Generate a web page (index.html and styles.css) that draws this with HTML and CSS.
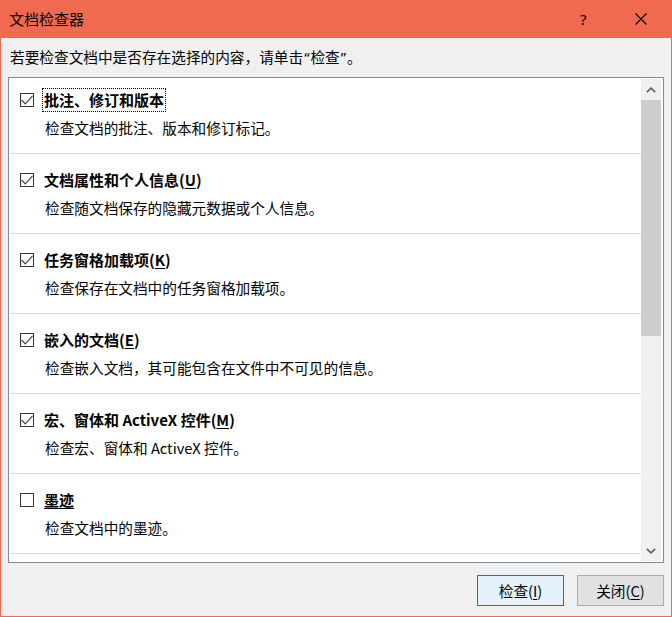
FILE: index.html
```html
<!DOCTYPE html>
<html lang="zh-CN">
<head>
<meta charset="utf-8">
<title>文档检查器</title>
<link rel="stylesheet" href="styles.css">
</head>
<body>
<div class="window">
  <div class="titlebar">
    <span class="title">文档检查器</span>
    <span class="help">?</span>
    <svg class="close" width="12" height="12" viewBox="0 0 12 12"><path d="M0.5 0.5 L11.5 11.5 M11.5 0.5 L0.5 11.5" stroke="#000" stroke-width="1.1" fill="none"/></svg>
  </div>
  <div class="content">
    <div class="intro">若要检查文档中是否存在选择的内容，请单击<span class="q">“</span>检查<span class="q">”</span>。</div>
    <div class="list">
      <div class="rows">
        <div class="row">
          <div class="head">
            <span class="cb"><svg width="12" height="12" viewBox="0 0 12 12"><polyline points="0.6,6 4.3,9.8 11.6,1.8" fill="none" stroke="#444" stroke-width="1.2"/></svg></span>
            <span class="name focus">批注、修订和版本</span>
          </div>
          <div class="desc">检查文档的批注、版本和修订标记。</div>
        </div>
        <div class="row">
          <div class="head">
            <span class="cb"><svg width="12" height="12" viewBox="0 0 12 12"><polyline points="0.6,6 4.3,9.8 11.6,1.8" fill="none" stroke="#444" stroke-width="1.2"/></svg></span>
            <span class="name">文档属性和个人信息(<u>U</u>)</span>
          </div>
          <div class="desc">检查随文档保存的隐藏元数据或个人信息。</div>
        </div>
        <div class="row">
          <div class="head">
            <span class="cb"><svg width="12" height="12" viewBox="0 0 12 12"><polyline points="0.6,6 4.3,9.8 11.6,1.8" fill="none" stroke="#444" stroke-width="1.2"/></svg></span>
            <span class="name">任务窗格加载项(<u>K</u>)</span>
          </div>
          <div class="desc">检查保存在文档中的任务窗格加载项。</div>
        </div>
        <div class="row">
          <div class="head">
            <span class="cb"><svg width="12" height="12" viewBox="0 0 12 12"><polyline points="0.6,6 4.3,9.8 11.6,1.8" fill="none" stroke="#444" stroke-width="1.2"/></svg></span>
            <span class="name">嵌入的文档(<u>E</u>)</span>
          </div>
          <div class="desc">检查嵌入文档，其可能包含在文件中不可见的信息。</div>
        </div>
        <div class="row">
          <div class="head">
            <span class="cb"><svg width="12" height="12" viewBox="0 0 12 12"><polyline points="0.6,6 4.3,9.8 11.6,1.8" fill="none" stroke="#444" stroke-width="1.2"/></svg></span>
            <span class="name">宏、窗体和 ActiveX 控件(<u>M</u>)</span>
          </div>
          <div class="desc">检查宏、窗体和 ActiveX 控件。</div>
        </div>
        <div class="row">
          <div class="head">
            <span class="cb"></span>
            <span class="name"><u>墨迹</u></span>
          </div>
          <div class="desc">检查文档中的墨迹。</div>
        </div>
      </div>
      <div class="scrollbar">
        <div class="arrow"><svg width="10" height="6" viewBox="0 0 10 6"><polyline points="0.8,5.2 5,1.2 9.2,5.2" fill="none" stroke="#606060" stroke-width="1.6"/></svg></div>
        <div class="track"><div class="thumb"></div></div>
        <div class="arrow"><svg width="10" height="6" viewBox="0 0 10 6"><polyline points="0.8,0.8 5,4.8 9.2,0.8" fill="none" stroke="#606060" stroke-width="1.6"/></svg></div>
      </div>
    </div>
    <div class="buttons">
      <button class="btn primary">检查(<u>I</u>)</button>
      <button class="btn">关闭(<u>C</u>)</button>
    </div>
  </div>
</div>
</body>
</html>
```
FILE: styles.css
```css
html, body {
  margin: 0;
  padding: 0;
}
body {
  width: 672px;
  height: 617px;
  overflow: hidden;
  font-family: "Noto Sans CJK SC", "Noto Sans", sans-serif;
  font-size: 14.67px;
  color: #000;
}
.window {
  width: 672px;
  height: 617px;
  background: #f06a52;
  display: flex;
  flex-direction: column;
  box-sizing: border-box;
  padding: 0 1px 1px 1px;
}
.titlebar {
  height: 38px;
  flex: none;
  display: flex;
  align-items: center;
  padding-left: 8px;
}
.title {
  font-size: 15px;
  line-height: 20px;
  flex: 1;
}
.help {
  font-family: "Noto Sans", "Liberation Sans", sans-serif;
  font-size: 15px;
  line-height: 20px;
  width: 10px;
  margin-right: 45px;
}
.close {
  margin-right: 24px;
}
.content {
  flex: 1;
  background: #f0f0f0;
  display: flex;
  flex-direction: column;
}
.intro {
  margin: 9px 0 0 9px;
  line-height: 20px;
  height: 20px;
}
.q {
  font-family: "Noto Sans", "Liberation Sans", sans-serif;
  padding: 0 1px;
}
.list {
  margin: 10px 7px 0 7px;
  height: 486px;
  box-sizing: border-box;
  border: 1px solid #828790;
  background: #fff;
  padding: 1px;
  display: flex;
  overflow: hidden;
}
.rows {
  flex: 1;
  margin-top: -5px;
  display: flex;
  flex-direction: column;
  overflow: hidden;
}
.row {
  height: 80px;
  flex: none;
  box-sizing: border-box;
  border-bottom: 1px solid #dcdcdc;
  padding-left: 10px;
  padding-top: 14px;
}
.head {
  display: flex;
  align-items: center;
  height: 24px;
}
.cb {
  width: 14px;
  height: 14px;
  box-sizing: border-box;
  border: 1px solid #333;
  background: #fff;
  display: flex;
  align-items: center;
  justify-content: center;
  margin-right: 8px;
}
.cb svg {
  display: block;
}
.name {
  font-weight: 700;
  font-size: 15px;
  line-height: 20px;
  padding: 1px;
  border: 1px dotted transparent;
  white-space: nowrap;
}
.name.focus {
  border-color: #000;
}
.name u, .btn u {
  text-underline-offset: 2px;
}
.desc {
  margin-top: 6px;
  padding-left: 25px;
  line-height: 20px;
  white-space: nowrap;
}
.scrollbar {
  width: 20px;
  flex: none;
  margin-right: 1px;
  background: #f0f0f0;
  display: flex;
  flex-direction: column;
}
.arrow {
  height: 21px;
  flex: none;
  display: flex;
  align-items: center;
  justify-content: center;
}
.track {
  flex: 1;
}
.thumb {
  height: 236px;
  background: #cdcdcd;
}
.buttons {
  display: flex;
  justify-content: flex-end;
  gap: 13px;
  margin: 12px 7px 0 0;
}
.btn {
  width: 87px;
  height: 31px;
  box-sizing: border-box;
  border: 1px solid #adadad;
  background: #e1e1e1;
  font-family: "Noto Sans CJK SC", "Noto Sans", sans-serif;
  font-size: 14.67px;
  line-height: 20px;
  color: #000;
  padding: 0;
}
.btn.primary {
  border-color: #0078d7;
  background: #e5f1fb;
}
```
